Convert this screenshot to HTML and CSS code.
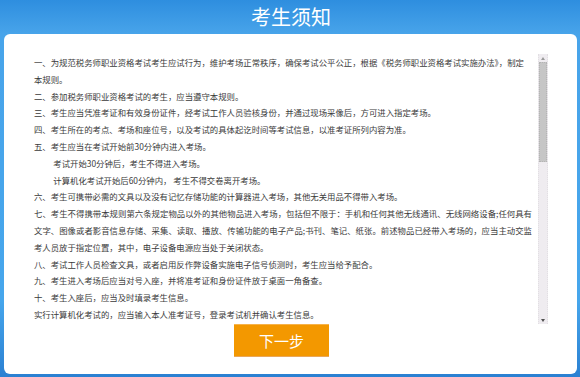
FILE: index.html
```html
<!DOCTYPE html>
<html lang="zh-CN">
<head>
    <meta charset="UTF-8">
    <meta name="viewport" content="width=device-width, initial-scale=1.0">
    <title>考生须知</title>
    <link rel="stylesheet" href="styles.css">
</head>
<body>
    <header class="header">
        <h1 class="title">考生须知</h1>
    </header>

    <main class="panel">
        <div class="notice-box">
            <div class="notice-text">
                <p>一、为规范税务师职业资格考试考生应试行为，维护考场正常秩序，确保考试公平公正，根据《税务师职业资格考试实施办法》，制定<br>本规则。</p>
                <p>二、参加税务师职业资格考试的考生，应当遵守本规则。</p>
                <p>三、考生应当凭准考证和有效身份证件，经考试工作人员验核身份，并通过现场采像后，方可进入指定考场。</p>
                <p>四、考生所在的考点、考场和座位号，以及考试的具体起讫时间等考试信息，以准考证所列内容为准。</p>
                <p>五、考生应当在考试开始前30分钟内进入考场。</p>
                <p class="indent">考试开始30分钟后，考生不得进入考场。</p>
                <p class="indent">计算机化考试开始后60分钟内， 考生不得交卷离开考场。</p>
                <p>六、考生可携带必需的文具以及没有记忆存储功能的计算器进入考场，其他无关用品不得带入考场。</p>
                <p>七、考生不得携带本规则第六条规定物品以外的其他物品进入考场，包括但不限于：手机和任何其他无线通讯、无线网络设备;任何具有文字、图像或者影音信息存储、采集、读取、播放、传输功能的电子产品;书刊、笔记、纸张。前述物品已经带入考场的，应当主动交监考人员放于指定位置，其中，电子设备电源应当处于关闭状态。</p>
                <p>八、考试工作人员检查文具，或者启用反作弊设备实施电子信号侦测时，考生应当给予配合。</p>
                <p>九、考生进入考场后应当对号入座，并将准考证和身份证件放于桌面一角备查。</p>
                <p>十、考生入座后，应当及时填录考生信息。</p>
                <p>实行计算机化考试的，应当输入本人准考证号，登录考试机并确认考生信息。</p>
            </div>
            <div class="scrollbar">
                <span class="scroll-arrow up"></span>
                <div class="scroll-track">
                    <div class="scroll-thumb"></div>
                </div>
                <span class="scroll-arrow down"></span>
            </div>
        </div>
        <div class="actions">
            <button class="next-btn" type="button">下一步</button>
        </div>
    </main>
</body>
</html>
```

FILE: styles.css
```css
* {
    margin: 0;
    padding: 0;
    box-sizing: border-box;
}

body {
    font-family: "Noto Sans CJK SC", "Noto Sans", sans-serif;
    background: linear-gradient(180deg, #2e8edf 0, #48a4ea 34px, #46a6ec 300px, #2b80d2 377px);
    height: 377px;
    overflow: hidden;
}

.header {
    height: 34px;
    display: flex;
    align-items: center;
    justify-content: center;
}

.title {
    font-size: 20px;
    font-weight: 400;
    color: #ffffff;
    line-height: 1;
    padding-left: 2px;
}

.panel {
    background: #ffffff;
    margin: 0 3px 0 4px;
    height: 340px;
    border-radius: 6px;
    padding-top: 20px;
}

.notice-box {
    margin-left: 26px;
    width: 518px;
    height: 270px;
    display: flex;
}

.notice-text {
    flex: 1;
    overflow: hidden;
    padding: 0 6px 0 4px;
    font-size: 8.4px;
    line-height: 16.8px;
    color: #3a3a3a;
    text-align: justify;
}

.notice-text p {
    margin: 0;
}

.notice-text .indent {
    padding-left: 2.3em;
}

/* fake scrollbar, scrolled to the top */
.scrollbar {
    width: 10px;
    display: flex;
    flex-direction: column;
    background: #efecf0;
    border-left: 1px dotted #e2dfe3;
    border-right: 1px dotted #e2dfe3;
}

.scroll-arrow {
    height: 8px;
    display: flex;
    align-items: center;
    justify-content: center;
}

.scroll-arrow::before {
    content: "";
    border-left: 2.5px solid transparent;
    border-right: 2.5px solid transparent;
}

.scroll-arrow.up::before {
    border-bottom: 3px solid #9a9a9a;
}

.scroll-arrow.down::before {
    border-top: 3px solid #505050;
}

.scroll-track {
    flex: 1;
}

.scroll-thumb {
    height: 100px;
    background: #c6c6c6;
    border: 1px dotted #b4b4b4;
}

.actions {
    display: flex;
    justify-content: center;
    padding-right: 18px;
}

.next-btn {
    width: 95px;
    height: 33px;
    background: #f39800;
    border: none;
    border-top: 1px solid #f7b34a;
    border-bottom: 1px solid #e9a75a;
    color: #ffffff;
    font-family: "Noto Sans CJK SC", "Noto Sans", sans-serif;
    font-size: 15px;
    cursor: pointer;
}
```
